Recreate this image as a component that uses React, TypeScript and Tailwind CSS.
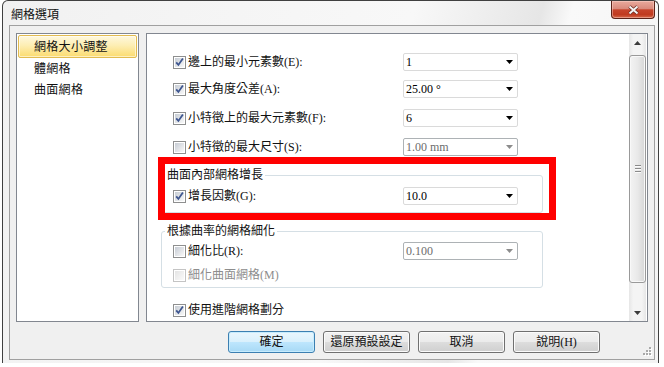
import React from 'react';

interface CheckProps {
  checked?: boolean;
  disabled?: boolean;
}

const CheckBox = ({ checked, disabled }: CheckProps) => (
  <svg width="13" height="13" viewBox="0 0 13 13" className="shrink-0">
    <defs>
      <linearGradient id="cb-on" x1="0" y1="0" x2="1" y2="1">
        <stop offset="0" stopColor="#c6ccd4" />
        <stop offset="1" stopColor="#f9f9f9" />
      </linearGradient>
      <linearGradient id="cb-off" x1="0" y1="0" x2="1" y2="1">
        <stop offset="0" stopColor="#e4e4e4" />
        <stop offset="1" stopColor="#fafafa" />
      </linearGradient>
    </defs>
    <rect x="0.5" y="0.5" width="12" height="12" fill="#fff" stroke={disabled ? '#c4c4c4' : '#8e8f8f'} />
    <rect x="2" y="2" width="9" height="9" fill={disabled ? 'url(#cb-off)' : 'url(#cb-on)'} />
    {checked && <path d="M3.2 6.3 5.4 8.9 9.9 2.5" fill="none" stroke="#3e5690" strokeWidth="1.8" />}
  </svg>
);

const Combo = ({ value, disabled }: { value: string; disabled?: boolean }) => (
  <div
    className={`flex h-[18px] w-[115px] items-center rounded-[2px] border bg-white pl-[2px] pr-[4px] ${
      disabled ? 'border-[#adb2b5] text-[#6d6d6d]' : 'border-[#dadada] text-black'
    }`}
  >
    <span className="flex-1 leading-[14px]">{value}</span>
    <svg width="7" height="4" viewBox="0 0 7 4">
      <path d="M0 0H7L3.5 4Z" fill={disabled ? '#8c8c8c' : '#000'} />
    </svg>
  </div>
);

interface RowProps {
  label: string;
  checked?: boolean;
  disabled?: boolean;
  value?: string;
  valueDisabled?: boolean;
  className?: string;
}

const OptionRow = ({ label, checked, disabled, value, valueDisabled, className }: RowProps) => (
  <div className={`flex h-[18px] items-center ${className ?? ''}`}>
    <div className={`flex w-[230px] items-center gap-[2px] ${disabled ? 'text-[#8d8d8d]' : ''}`}>
      <CheckBox checked={checked} disabled={disabled} />
      <span className="leading-[14px] whitespace-nowrap">{label}</span>
    </div>
    {value !== undefined && <Combo value={value} disabled={valueDisabled} />}
  </div>
);

const Arrow = ({ down }: { down?: boolean }) => (
  <svg width="7" height="4" viewBox="0 0 7 4">
    <path d={down ? 'M0 0H7L3.5 4Z' : 'M0 4H7L3.5 0Z'} fill="#3c3c3c" />
  </svg>
);

const Button = ({ label, primary }: { label: string; primary?: boolean }) => (
  <div
    className={`flex h-[22px] w-[87px] items-center justify-center rounded-[3px] border leading-[14px] ${
      primary
        ? 'border-[#3c7fb1] bg-[linear-gradient(180deg,#eaf6fd_0%,#d9f0fc_50%,#bee6fd_50%,#a7d9f5_100%)] shadow-[inset_0_0_0_1px_#c7ecfd]'
        : 'border-[#707070] bg-[linear-gradient(180deg,#f2f2f2_0%,#ebebeb_50%,#dddddd_50%,#cfcfcf_100%)] shadow-[inset_0_0_0_1px_#fbfbfb]'
    }`}
  >
    {label}
  </div>
);

export default function App() {
  return (
    <div className="h-[367px] w-[664px] bg-white pl-[2px] font-['Liberation_Serif','Noto_Sans_CJK_TC',serif] text-[12px] text-[#111111]">
      <div className="flex h-[363px] w-[657px] flex-col rounded-t-[6px] border-x border-t border-[#404040] bg-[linear-gradient(105deg,#f1f1f1_0%,#f8f8f8_55%,#e6e6e6_72%,#f9f9f9_76%,#f3f3f3_100%)]">
        {/* title bar */}
        <div className="flex h-[24px] items-start">
          <span className="ml-[8px] mt-[7px] leading-[14px]">網格選項</span>
          <div className="ml-auto mr-[3px] flex h-[18px] w-[44px] items-center justify-center rounded-b-[4px] border border-t-0 border-[#5b2218] bg-[linear-gradient(180deg,#e9aa9d_0%,#d98a7c_45%,#c7442b_52%,#c03a1f_80%,#d7694a_100%)] shadow-[inset_0_0_0_1px_rgba(255,220,210,0.45)]">
            <svg width="13" height="10" viewBox="0 0 13 10">
              <path d="M2.5 1.5 10.5 8.5M10.5 1.5 2.5 8.5" stroke="#6b2b20" strokeWidth="3.6" />
              <path d="M2.5 1.5 10.5 8.5M10.5 1.5 2.5 8.5" stroke="#f4f4f4" strokeWidth="2" />
            </svg>
          </div>
        </div>

        {/* client area */}
        <div className="ml-[6px] flex h-[335px] w-[646px] flex-col border border-[#a0a0a0] bg-[#f0f0f0]">
          <div className="flex gap-[7px] pl-[6px] pt-[7px]">
            {/* left list */}
            <div className="h-[289px] w-[123px] border border-[#828790] bg-white px-[1px] pt-[1px]">
              <div className="flex h-[23px] items-center rounded-[2px] border border-[#e2bb4f] bg-[linear-gradient(180deg,#fef8de_0%,#fdeeb3_45%,#fbdb6f_100%)] pl-[15px] leading-[14px] tracking-[0.3px] shadow-[inset_0_0_0_1px_rgba(255,255,255,0.55)]">
                網格大小調整
              </div>
              <div className="flex h-[21px] items-center pl-[16px] leading-[14px] tracking-[0.3px]">體網格</div>
              <div className="flex h-[21px] items-center pl-[16px] leading-[14px] tracking-[0.3px]">曲面網格</div>
            </div>

            {/* right panel */}
            <div className="flex h-[289px] w-[502px] border border-[#828790] bg-white">
              <div className="relative flex-1 pl-[14px] pt-[19px]">
                <OptionRow className="ml-[12px]" label="邊上的最小元素數(E):" checked value="1" />
                <OptionRow className="ml-[12px] mt-[9px]" label="最大角度公差(A):" checked value="25.00 °" />
                <OptionRow className="ml-[12px] mt-[11px]" label="小特徵上的最大元素數(F):" checked value="6" />
                <OptionRow className="ml-[12px] mt-[11px]" label="小特徵的最大尺寸(S):" value="1.00 mm" valueDisabled />

                <fieldset className="mt-[12px] w-[382px] rounded-[3px] border border-[#d5dfe5] pb-[7px] pl-[3px]">
                  <legend className="px-[2px] leading-[14px]">曲面內部網格增長</legend>
                  <OptionRow className="ml-[8px] mt-[5px]" label="增長因數(G):" checked value="10.0" />
                </fieldset>

                <fieldset className="mt-[11px] w-[382px] rounded-[3px] border border-[#d5dfe5] pb-[4px] pl-[3px]">
                  <legend className="px-[2px] leading-[14px]">根據曲率的網格細化</legend>
                  <OptionRow className="ml-[8px] mt-[4px]" label="細化比(R):" value="0.100" valueDisabled />
                  <div className="ml-[8px] mt-[7px] flex h-[16px] items-center gap-[2px] text-[#8d8d8d]">
                    <CheckBox disabled />
                    <span className="leading-[14px]">細化曲面網格(M)</span>
                  </div>
                </fieldset>

                <OptionRow className="ml-[12px] mt-[13px]" label="使用進階網格劃分" checked />

                <div className="absolute left-[11px] top-[123px] h-[63px] w-[398px] border-[7px] border-[#ff0000]" />
              </div>

              {/* scrollbar */}
              <div className="mr-[1px] flex w-[17px] flex-col bg-[linear-gradient(90deg,#e6e6e6_0%,#f4f4f4_25%,#f4f4f4_75%,#e6e6e6_100%)]">
                <div className="flex h-[17px] items-center justify-center">
                  <Arrow />
                </div>
                <div className="mt-[4px] flex h-[228px] items-center justify-center rounded-[3px] border border-[#999999] bg-[linear-gradient(90deg,#f3f3f3_0%,#e9e9e9_50%,#d6d6d6_100%)] shadow-[inset_0_0_0_1px_#f8f8f8]">
                  <svg width="6" height="8" viewBox="0 0 6 8">
                    <path d="M0 0.5H6M0 3.5H6M0 6.5H6" stroke="#8a8a8a" />
                    <path d="M0 1.5H6M0 4.5H6M0 7.5H6" stroke="#fbfbfb" />
                  </svg>
                </div>
                <div className="mt-auto flex h-[17px] items-center justify-center">
                  <Arrow down />
                </div>
              </div>
            </div>
          </div>

          {/* buttons */}
          <div className="mt-[9px] flex flex-1 items-start gap-[8px] pl-[218px]">
            <Button label="確定" primary />
            <Button label="還原預設設定" />
            <Button label="取消" />
            <Button label="說明(H)" />
            <svg width="10" height="10" viewBox="0 0 10 10" className="mb-[3px] ml-auto mr-[2px] self-end">
              <g fill="#ffffff">
                <rect x="8" y="2" width="2" height="2" />
                <rect x="8" y="5" width="2" height="2" />
                <rect x="5" y="5" width="2" height="2" />
                <rect x="8" y="8" width="2" height="2" />
                <rect x="5" y="8" width="2" height="2" />
                <rect x="2" y="8" width="2" height="2" />
              </g>
              <g fill="#a9a9a9">
                <rect x="7" y="1" width="2" height="2" />
                <rect x="7" y="4" width="2" height="2" />
                <rect x="4" y="4" width="2" height="2" />
                <rect x="7" y="7" width="2" height="2" />
                <rect x="4" y="7" width="2" height="2" />
                <rect x="1" y="7" width="2" height="2" />
              </g>
            </svg>
          </div>
        </div>
      </div>
    </div>
  );
}
